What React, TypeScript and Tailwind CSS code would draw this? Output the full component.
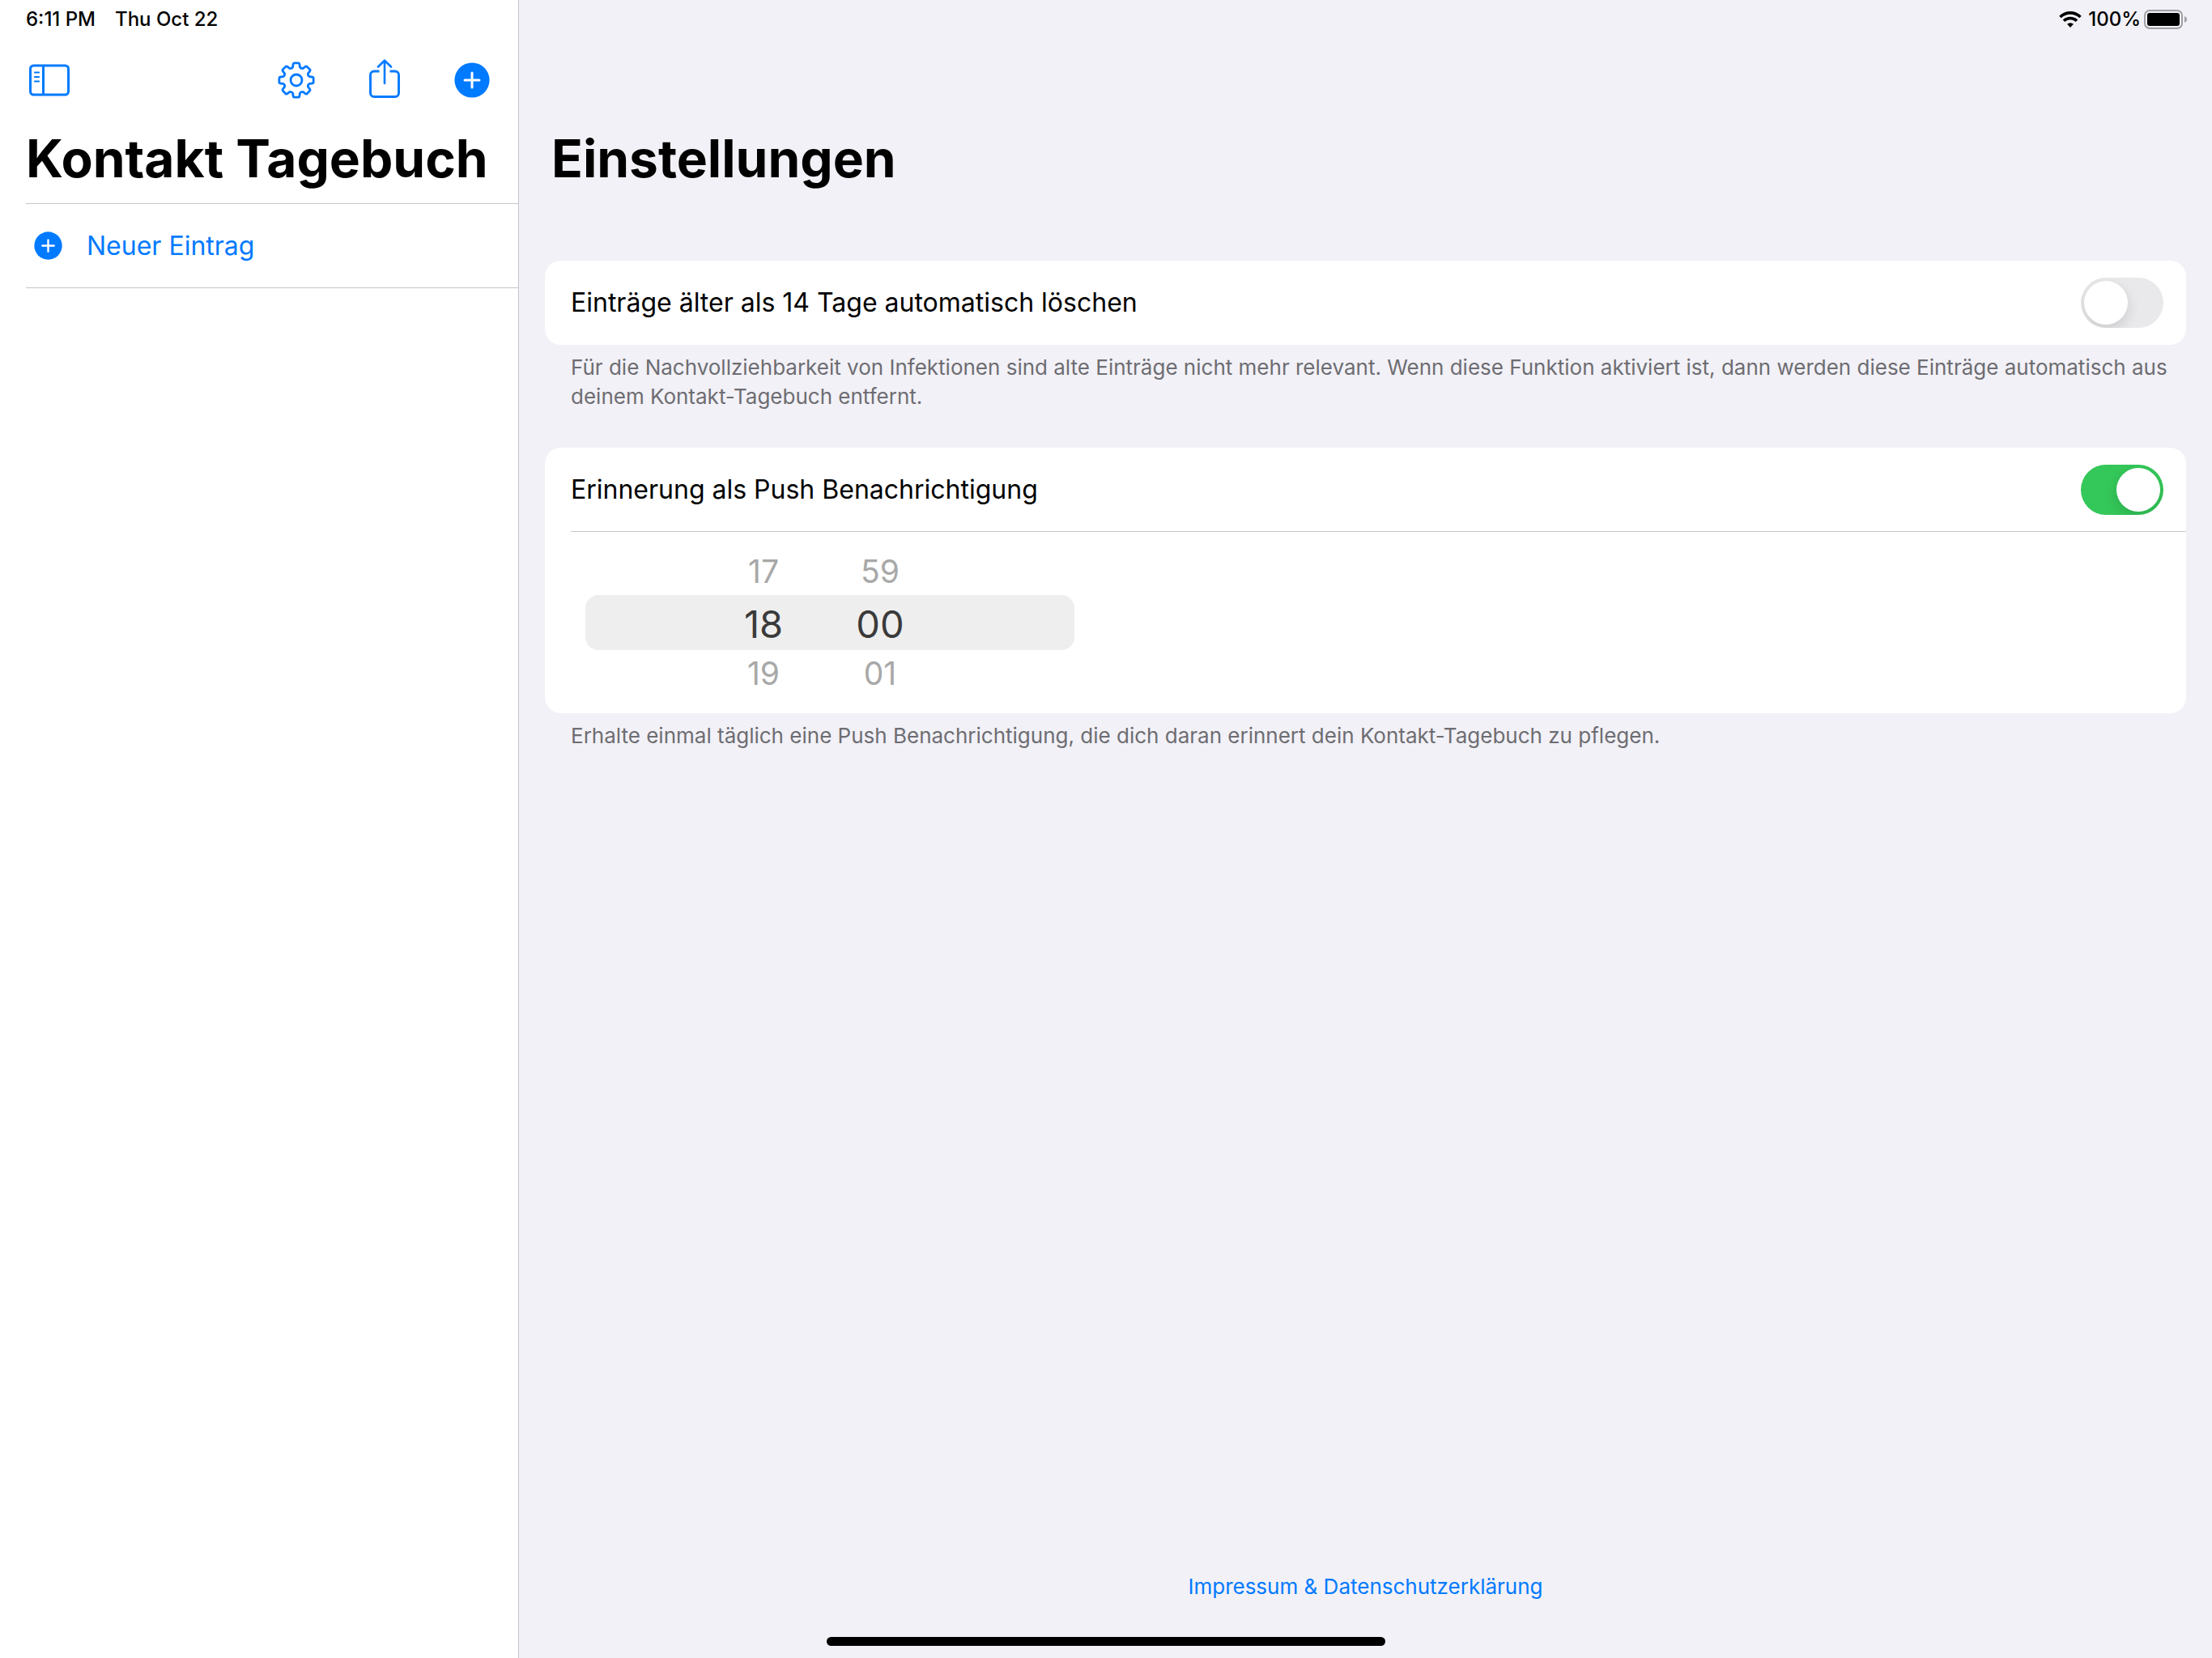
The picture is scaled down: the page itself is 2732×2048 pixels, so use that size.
import { useState } from "react";

const GEAR_CENTER = 23;

function polar(radius: number, degrees: number) {
  const angle = ((degrees - 90) * Math.PI) / 180;
  const x = GEAR_CENTER + radius * Math.cos(angle);
  const y = GEAR_CENTER + radius * Math.sin(angle);
  return `${x.toFixed(2)} ${y.toFixed(2)}`;
}

function gearPath() {
  let d = `M${polar(16.8, -15)}`;
  for (let tooth = 0; tooth < 8; tooth++) {
    const a = tooth * 45;
    d += ` L${polar(20, a - 11.5)} Q${polar(21.5, a - 10)} ${polar(21.3, a - 7)}`;
    d += ` L${polar(21.3, a + 7)} Q${polar(21.5, a + 10)} ${polar(20, a + 11.5)}`;
    d += ` L${polar(16.8, a + 15)} Q${polar(15, a + 22.5)} ${polar(16.8, a + 30)}`;
  }
  return `${d} Z`;
}

function SidebarIcon() {
  return (
    <svg width="50" height="40" viewBox="0 0 50 40" fill="none" stroke="currentColor" aria-hidden="true">
      <rect x="1.5" y="2" width="47" height="36" rx="4" strokeWidth="3" />
      <path d="M17.5 2v36" strokeWidth="3" />
      <path d="M7 10.500h5M7 16h5M7 21.500h5" strokeWidth="2.200" strokeLinecap="round" />
    </svg>
  );
}

function GearIcon() {
  return (
    <svg width="46" height="46" viewBox="0 0 46 46" fill="none" stroke="currentColor" strokeWidth="2.8" strokeLinejoin="round" aria-hidden="true">
      <path d={gearPath()} />
      <circle cx="23" cy="23" r="7" />
    </svg>
  );
}

function ShareIcon() {
  return (
    <svg width="38" height="52" viewBox="0 0 38 52" fill="none" stroke="currentColor" strokeWidth="2.9" strokeLinecap="round" strokeLinejoin="round" aria-hidden="true">
      <path d="M12.500 15H6A4.500 4.500 0 0 0 1.500 19.500V42A4.500 4.500 0 0 0 6 46.500H32A4.500 4.500 0 0 0 36.500 42V19.500A4.500 4.500 0 0 0 32 15H25.500" strokeLinecap="butt" />
      <path d="M19 2V30M11 9.500L19 1.700L27 9.500" strokeWidth="2.600" />
    </svg>
  );
}

function PlusCircleIcon({ size }: { size: number }) {
  return (
    <svg width={size} height={size} viewBox="0 0 44 44" aria-hidden="true">
      <circle cx="22" cy="22" r="21.6" fill="currentColor" />
      <path d="M22 13v18M13 22h18" stroke="#fff" strokeWidth="3" strokeLinecap="round" />
    </svg>
  );
}

function WifiIcon() {
  return (
    <svg width="28" height="20" viewBox="0 0 28 20" fill="none" stroke="currentColor" strokeWidth="3.600" aria-hidden="true">
      <path d="M1.500 7A17.800 17.800 0 0 1 26.500 7" />
      <path d="M6 11.700A11.500 11.500 0 0 1 22 11.700" />
      <path d="M14 20l-4-4.200a5.700 5.700 0 0 1 8 0z" fill="currentColor" stroke="none" />
    </svg>
  );
}

function BatteryIcon() {
  return (
    <svg width="54" height="24" viewBox="0 0 54 24" aria-hidden="true">
      <rect x="1" y="1" width="46" height="22" rx="6" fill="none" stroke="#a09fa3" strokeWidth="2" />
      <rect x="4" y="4" width="40" height="16" rx="3" fill="#000" />
      <path d="M50 8c4 1.500 4 6.500 0 8z" fill="#a09fa3" />
    </svg>
  );
}

type ToggleProps = { id: string; checked: boolean; onChange: (value: boolean) => void };

function Toggle({ id, checked, onChange }: ToggleProps) {
  return (
    <input
      id={id}
      type="checkbox"
      role="switch"
      checked={checked}
      onChange={(event) => onChange(event.target.checked)}
      className="flex h-[62px] w-[102px] shrink-0 cursor-pointer appearance-none items-center overflow-hidden rounded-full bg-[#e9e9eb] p-1 before:size-[54px] before:rounded-full before:bg-white before:shadow-[0_6px_16px_rgba(0,0,0,0.13)] before:content-[''] checked:justify-end checked:bg-[#34c759]"
    />
  );
}

function Wheel({ label, values }: { label: string; values: string[] }) {
  return (
    <div role="group" aria-label={label} className="flex w-16 flex-col items-center">
      <button type="button" className="h-[60px] text-[39px] text-[#a8a8a8]">{values[0]}</button>
      <button type="button" aria-current="true" className="h-[66px] text-[47px] text-[#3a3a3a]">{values[1]}</button>
      <button type="button" className="h-[60px] text-[39px] text-[#a8a8a8]">{values[2]}</button>
    </div>
  );
}

export default function App() {
  const [autoDelete, setAutoDelete] = useState(false);
  const [reminder, setReminder] = useState(true);

  return (
    <div className="relative flex min-h-screen bg-[#f2f1f7] font-['Inter',sans-serif] text-black">
      <aside className="flex w-[641px] shrink-0 flex-col border-r border-[#c6c6c8] bg-white">
        <div className="flex h-12 items-center gap-6 pl-8 text-2xl font-medium">
          <span>6:11 PM</span>
          <span>Thu Oct 22</span>
        </div>
        <nav aria-label="Werkzeuge" className="flex h-[101px] items-center pr-[35px] pl-9 text-[#007aff]">
          <button type="button" aria-label="Seitenleiste" className="mr-auto"><SidebarIcon /></button>
          <div className="flex items-center gap-[67px]">
            <button type="button" aria-label="Einstellungen"><GearIcon /></button>
            <button type="button" aria-label="Teilen"><ShareIcon /></button>
            <button type="button" aria-label="Hinzufügen"><PlusCircleIcon size={44} /></button>
          </div>
        </nav>
        <h1 className="h-[102px] pl-8 text-[64px] leading-[94px] font-bold whitespace-nowrap">Kontakt Tagebuch</h1>
        <button type="button" className="ml-8 flex h-[105px] items-center gap-[30px] border-y border-[#c6c6c8] pl-[10px] text-[32px] text-[#007aff]">
          <PlusCircleIcon size={35} />
          <span>Neuer Eintrag</span>
        </button>
      </aside>

      <main className="flex min-w-0 flex-1 flex-col px-8">
        <div className="-mr-[2px] flex h-12 items-center justify-end text-2xl font-medium">
          <WifiIcon />
          <span className="ml-2">100%</span>
          <span className="ml-1"><BatteryIcon /></span>
        </div>
        <h2 className="mt-[101px] h-[173px] pl-2 text-[64px] leading-[94px] font-bold">Einstellungen</h2>

        <section className="rounded-[20px] bg-white">
          <div className="flex h-[104px] items-center justify-between pr-7 pl-8">
            <label htmlFor="auto-delete" className="text-[32px]">Einträge älter als 14 Tage automatisch löschen</label>
            <Toggle id="auto-delete" checked={autoDelete} onChange={setAutoDelete} />
          </div>
        </section>
        <p className="mt-[10px] pr-4 pl-8 text-[26px] leading-9 text-[#6d6d72]">
          Für die Nachvollziehbarkeit von Infektionen sind alte Einträge nicht mehr relevant. Wenn diese Funktion aktiviert ist, dann werden diese Einträge automatisch aus deinem Kontakt-Tagebuch entfernt.
        </p>

        <section className="mt-[45px] rounded-[20px] bg-white">
          <div className="ml-8 flex h-[104px] items-center justify-between border-b border-[#c6c6c8] pr-7">
            <label htmlFor="reminder" className="text-[32px]">Erinnerung als Push Benachrichtigung</label>
            <Toggle id="reminder" checked={reminder} onChange={setReminder} />
          </div>
          <div className="relative mx-[50px] flex h-[224px] w-[604px] items-center justify-center">
            <div className="absolute inset-x-0 top-[78px] h-[68px] rounded-2xl bg-[#eeeeee]" />
            <div className="relative flex gap-20 pr-5">
              <Wheel label="Stunde" values={["17", "18", "19"]} />
              <Wheel label="Minute" values={["59", "00", "01"]} />
            </div>
          </div>
        </section>
        <p className="mt-[10px] pr-4 pl-8 text-[26px] leading-9 text-[#6d6d72]">
          Erhalte einmal täglich eine Push Benachrichtigung, die dich daran erinnert dein Kontakt-Tagebuch zu pflegen.
        </p>

        <footer className="mt-auto flex justify-center pb-[70px]">
          <a href="#impressum" className="text-[26px] leading-9 text-[#007aff]">Impressum &amp; Datenschutzerklärung</a>
        </footer>
      </main>

      <div className="absolute bottom-[15px] left-1/2 h-[11px] w-[690px] -translate-x-1/2 rounded-full bg-black" />
    </div>
  );
}
